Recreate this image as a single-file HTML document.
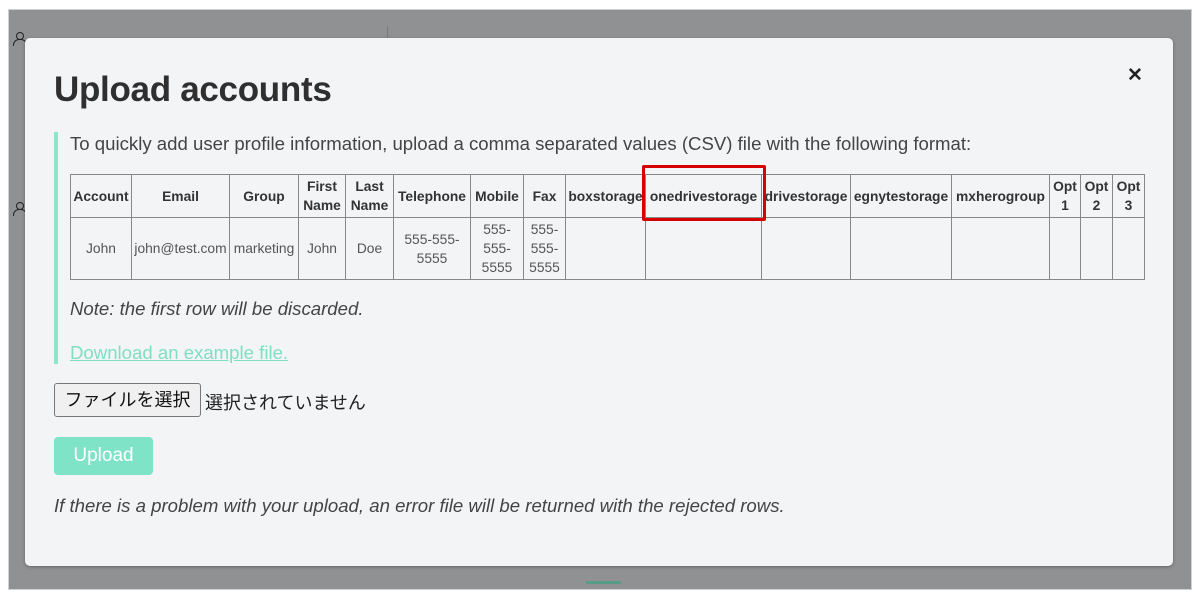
<!DOCTYPE html>
<html><head><meta charset="utf-8">
<style>
*{box-sizing:border-box;margin:0;padding:0}
html,body{width:1200px;height:599px;overflow:hidden;background:#fff;font-family:"Liberation Sans","Noto Sans CJK JP",sans-serif;color:#333}
.frame{position:absolute;left:8px;top:9px;width:1184px;height:581px;background:#8f9192;border:1px solid #d0d0d0}
.modal{position:absolute;left:25px;top:38px;width:1148px;height:528px;background:#f3f4f6;border-radius:5px;box-shadow:0 1px 3px rgba(0,0,0,.3)}
.abs{position:absolute}
h1{position:absolute;left:54px;top:70px;font-size:35px;font-weight:bold;color:#2f2f2f;letter-spacing:-0.3px}
.close{left:1127px;top:64px;font-size:19px;font-weight:bold;color:#222}
.bar{left:54px;top:132px;width:4px;height:232px;background:#8ee6c9}
.intro{left:70px;top:133px;font-size:18.6px;color:#444}
table{position:absolute;left:70px;top:174px;border-collapse:collapse;table-layout:fixed;font-size:13.8px}
td,th{border:1px solid #888;text-align:center;padding:0 1px;line-height:19px}
th{font-weight:bold;color:#333;height:43px}
td{color:#555;height:62px}
.red{left:642px;top:165px;width:124px;height:56px;border:3px solid #d60000;border-radius:2px}
.note{left:70px;top:298px;font-size:18.6px;font-style:italic;color:#444}
.link{left:70px;top:342px;font-size:18.6px;color:#7fdfc0;text-decoration:underline}
.file{left:54px;top:383px;width:147px;height:34px;border:1px solid #777;border-radius:3px;background:#f0f0f0;font-size:18px;color:#111;line-height:32px;text-align:center}
.nosel{left:205px;top:389px;font-size:18px;color:#222}
.up{left:54px;top:437px;width:99px;height:38px;background:#7fe3c8;border-radius:4px;color:#fff;font-size:19px;line-height:38px;text-align:center}
.foot{left:54px;top:495px;font-size:18.6px;font-style:italic;color:#444}
.person{width:12px;height:14px}
.person:before{content:"";position:absolute;left:3px;top:0;width:6px;height:6px;border:1.5px solid #222;border-radius:50%}
.person:after{content:"";position:absolute;left:0;top:7px;width:12px;height:6px;border:1.5px solid #222;border-bottom:none;border-radius:6px 6px 0 0}
</style></head><body>
<div class="frame">
  <div class="abs person" style="left:4px;top:22px"></div>
  <div class="abs person" style="left:4px;top:192px"></div>
  <div class="abs" style="left:378px;top:16px;width:1px;height:20px;background:#777"></div>
  <div class="abs" style="left:577px;top:571px;width:35px;height:3px;background:#5a9b86"></div>
</div>
<div class="modal"></div>
<h1>Upload accounts</h1>
<div class="abs close">✕</div>
<div class="abs bar"></div>
<div class="abs intro">To quickly add user profile information, upload a comma separated values (CSV) file with the following format:</div>
<table>
<colgroup><col style="width:61px"><col style="width:98px"><col style="width:69px"><col style="width:47px"><col style="width:48px"><col style="width:77px"><col style="width:53px"><col style="width:42px"><col style="width:80px"><col style="width:116px"><col style="width:89px"><col style="width:101px"><col style="width:98px"><col style="width:31px"><col style="width:32px"><col style="width:32px"></colgroup>
<tr><th>Account</th><th>Email</th><th>Group</th><th>First Name</th><th>Last Name</th><th>Telephone</th><th>Mobile</th><th>Fax</th><th>boxstorage</th><th>onedrivestorage</th><th>drivestorage</th><th>egnytestorage</th><th>mxherogroup</th><th>Opt 1</th><th>Opt 2</th><th>Opt 3</th></tr>
<tr><td>John</td><td>john@test.com</td><td>marketing</td><td>John</td><td>Doe</td><td>555-555-<br>5555</td><td>555-<br>555-<br>5555</td><td>555-<br>555-<br>5555</td><td></td><td></td><td></td><td></td><td></td><td></td><td></td><td></td></tr>
</table>
<div class="abs red"></div>
<div class="abs note">Note: the first row will be discarded.</div>
<div class="abs link">Download an example file.</div>
<div class="abs file">ファイルを選択</div>
<div class="abs nosel">選択されていません</div>
<div class="abs up">Upload</div>
<div class="abs foot">If there is a problem with your upload, an error file will be returned with the rejected rows.</div>
</body></html>
